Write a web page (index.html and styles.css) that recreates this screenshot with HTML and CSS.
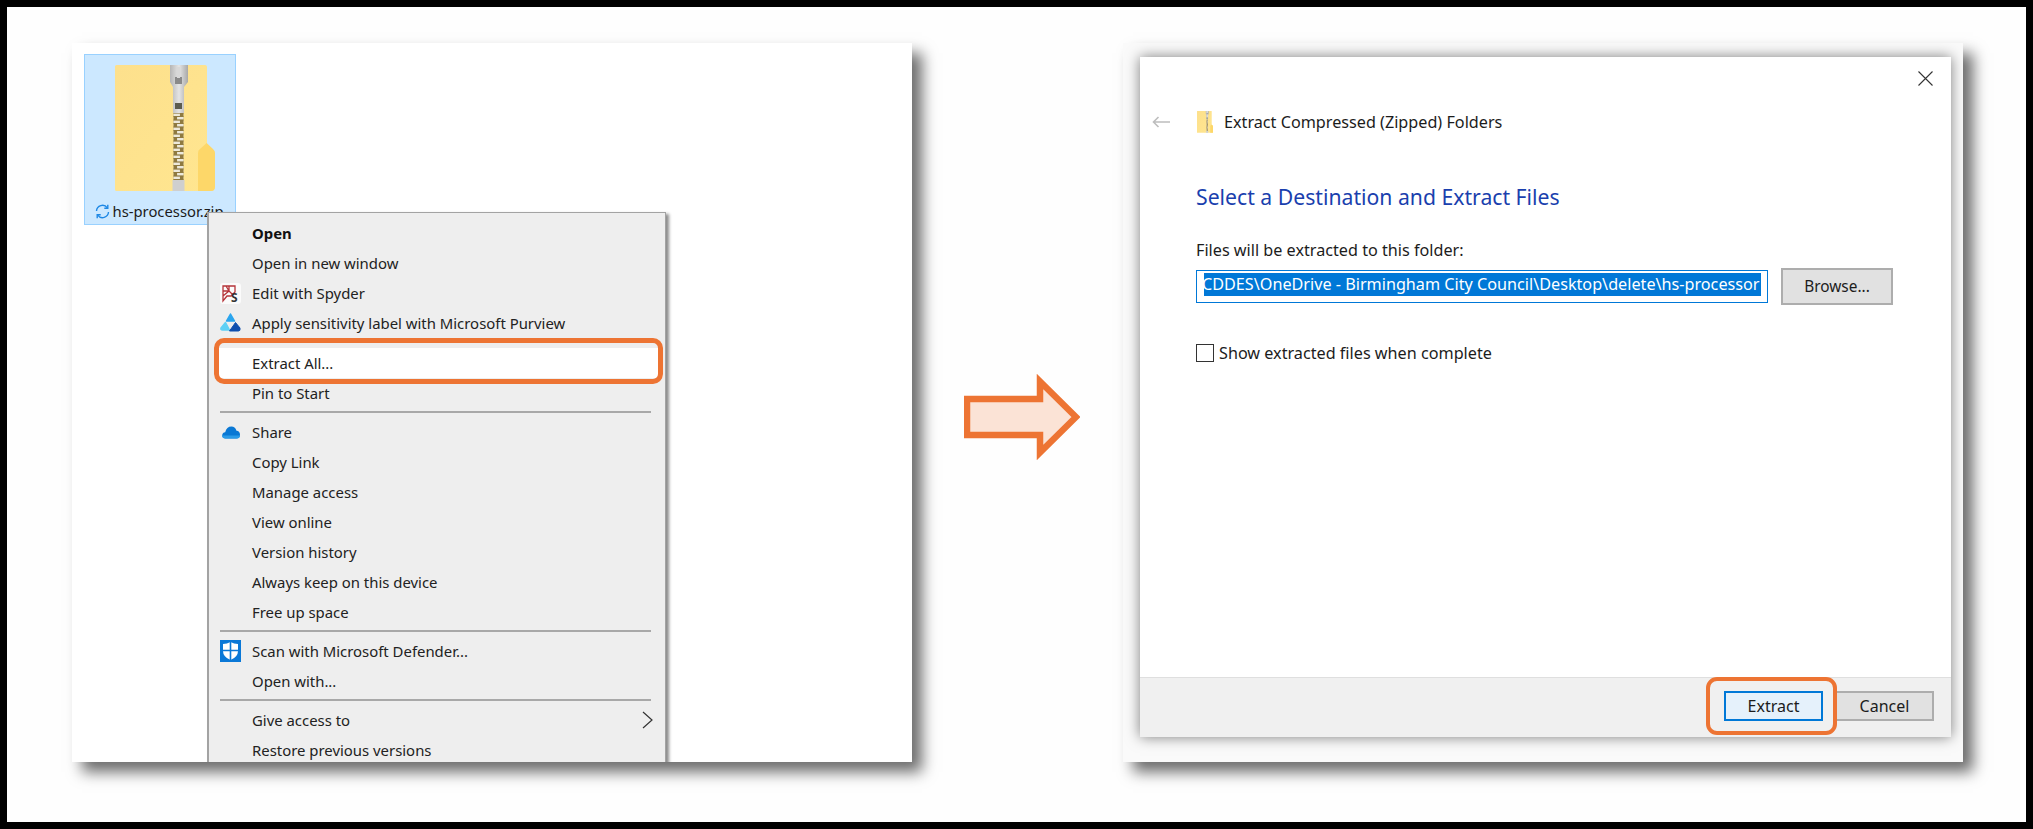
FILE: index.html
```html
<!DOCTYPE html>
<html lang="en">
<head>
<meta charset="utf-8">
<title>Extract zipped folder</title>
<link rel="stylesheet" href="styles.css">
</head>
<body>
<svg class="defs" width="0" height="0" aria-hidden="true">
  <defs>
    <linearGradient id="fg" x1="0" y1="0" x2="1" y2="1">
      <stop offset="0" stop-color="#fde08c"/><stop offset="1" stop-color="#ffe690"/>
    </linearGradient>
    <linearGradient id="mg" x1="0" y1="0" x2="1" y2="0">
      <stop offset="0" stop-color="#b5b5b5"/><stop offset=".5" stop-color="#e4e4e4"/><stop offset="1" stop-color="#a8a8a8"/>
    </linearGradient>
    <pattern id="teeth" width="10.4" height="7" patternUnits="userSpaceOnUse" x="58.3" y="48">
      <rect width="10.4" height="7" fill="#8f7a40"/>
      <rect x="0" y="0.6" width="6.6" height="2.4" fill="#ece9dc"/>
      <rect x="3.8" y="4" width="6.6" height="2.4" fill="#ece9dc"/>
    </pattern>
    <symbol id="zipfolder" viewBox="0 0 100 127" preserveAspectRatio="none">
      <path d="M0 1.500Q0 0 1.500 0H90Q92 0 92 2V80L99.500 86V123Q99.500 126 96 126H1.500Q0 126 0 124.500Z" fill="url(#fg)"/>
      <path d="M83 126V88Q83 85 85 84L91.700 78L98 84Q100 86 100 88V122Q100 126 96 126Z" fill="#fdd769"/>
      <rect x="58.300" y="48" width="10.400" height="67" fill="url(#teeth)"/>
      <rect x="57.500" y="115" width="12" height="11" fill="#cfcfcf"/>
      <path d="M55 0H73V17L69 22V48H58V22L55 17Z" fill="url(#mg)"/>
      <rect x="60" y="38" width="7" height="6" fill="#5c5c50"/>
      <rect x="60" y="12" width="7" height="7" fill="#8a8a8a"/>
      <rect x="62" y="2" width="3" height="11" fill="#d8d8d8"/>
    </symbol>
  </defs>
</svg>
<main class="frame">
  <section class="card card-left">
    <div class="tile">
      <svg class="tile-icon" width="100" height="127"><use href="#zipfolder"/></svg>
      <div class="tile-label">
        <svg class="sync" width="15" height="15" viewBox="0 0 15 15" fill="none" stroke="#1e88e5" stroke-width="1.400">
          <path d="M1.500 7A6 6 0 0 1 12.300 3.800"/>
          <path d="M13.500 8A6 6 0 0 1 2.700 11.200"/>
          <path d="M12.800 .8V4.300H9.300"/>
          <path d="M2.200 14.200V10.700H5.700"/>
        </svg>
        <span>hs-processor.zip</span>
      </div>
    </div>
    <div class="menu">
      <div class="row bold"><span class="ic"></span>Open</div>
      <div class="row"><span class="ic"></span>Open in new window</div>
      <div class="row"><span class="ic">
        <svg width="21" height="21" viewBox="0 0 21 21">
          <rect width="21" height="21" rx="3" fill="#fbfbfb"/>
          <path d="M3 3H15V9L11 13H7L3 18ZM3 8H9M9 3V8L13 12M3 13L9 8M6 3L9 8" fill="none" stroke="#b5353a" stroke-width="1.300"/>
          <text class="spy" x="11" y="19">S</text>
        </svg>
      </span>Edit with Spyder</div>
      <div class="row"><span class="ic">
        <svg width="21" height="20" viewBox="0 0 21 20">
          <path d="M10.500 1L14.500 8H6.500Z" fill="#2aa5ee" stroke="#2aa5ee" stroke-width="1.500" stroke-linejoin="round"/>
          <path d="M5.500 9.500L9.500 17H2.500Q.500 17 1 15Z" fill="#5fd0f5" stroke="#5fd0f5" stroke-width="1.500" stroke-linejoin="round"/>
          <path d="M15.500 9.500L20 15Q20.500 18 18.500 18H9.500Z" fill="#0f4fae" stroke="#0f4fae" stroke-width="1" stroke-linejoin="round"/>
          <path d="M6.500 9H14.500L10.500 15Z" fill="#eeeeee"/>
        </svg>
      </span>Apply sensitivity label with Microsoft Purview</div>
      <div class="row hl"><span class="ic"></span>Extract All...</div>
      <div class="row"><span class="ic"></span>Pin to Start</div>
      <div class="sep"></div>
      <div class="row"><span class="ic">
        <svg width="18" height="13" viewBox="0 0 18 13">
          <path d="M3.500 12.500Q.2 12.500 .2 9.500Q.2 6.500 3.200 6.300Q4.500 .5 9.500 .5Q13 .5 14.500 4.700Q18 5 18 8.800Q18 12.500 14.500 12.500Z" fill="#0a78d4"/>
          <path d="M3.500 12.500Q.2 12.500 .2 9.500H18Q18 12.500 14.500 12.500Z" fill="#2b9be8"/>
        </svg>
      </span>Share</div>
      <div class="row"><span class="ic"></span>Copy Link</div>
      <div class="row"><span class="ic"></span>Manage access</div>
      <div class="row"><span class="ic"></span>View online</div>
      <div class="row"><span class="ic"></span>Version history</div>
      <div class="row"><span class="ic"></span>Always keep on this device</div>
      <div class="row"><span class="ic"></span>Free up space</div>
      <div class="sep"></div>
      <div class="row"><span class="ic">
        <svg width="21" height="22" viewBox="0 0 21 22">
          <rect width="21" height="22" fill="#0a78d7"/>
          <path d="M10.500 2Q14 4 18 4V11Q18 17 10.500 20Q3 17 3 11V4Q7 4 10.500 2Z" fill="#fff"/>
          <path d="M10.500 2V20M3 10.500H18" stroke="#0a78d7" stroke-width="1.600"/>
        </svg>
      </span>Scan with Microsoft Defender...</div>
      <div class="row"><span class="ic"></span>Open with...</div>
      <div class="sep"></div>
      <div class="row row-sub"><span class="ic"></span>Give access to
        <svg class="chev" width="11" height="18" viewBox="0 0 11 18" fill="none" stroke="#333" stroke-width="1.200"><path d="M1 1L10 9L1 17"/></svg>
      </div>
      <div class="row"><span class="ic"></span>Restore previous versions</div>
    </div>
  </section>

  <svg class="arrow" width="116" height="86" viewBox="0 0 116 86">
    <path d="M3 25H76V7.500L112 43L76 78.500V61H3Z" fill="#fbe3d6" stroke="#ed7433" stroke-width="6.500"/>
  </svg>

  <section class="card card-right">
    <div class="dialog">
      <div class="dlg-body">
        <div class="dlg-close">
          <svg width="15" height="15" viewBox="0 0 15 15" stroke="#333" stroke-width="1.100"><path d="M.5 .5L14.500 14.500M14.500 .5L.5 14.500"/></svg>
        </div>
        <div class="dlg-head">
          <svg class="back" width="18" height="12" viewBox="0 0 18 12" fill="none" stroke="#bdbdbd" stroke-width="1.600"><path d="M18 6H1.500M6.500 1L1.500 6L6.500 11"/></svg>
          <svg class="mini" width="16" height="22"><use href="#zipfolder"/></svg>
          <span>Extract Compressed (Zipped) Folders</span>
        </div>
        <div class="dlg-content">
          <h1>Select a Destination and Extract Files</h1>
          <div class="lbl">Files will be extracted to this folder:</div>
          <div class="path-row">
            <div class="path"><span>CDDES\OneDrive - Birmingham City Council\Desktop\delete\hs-processor</span></div>
            <div class="btn btn-browse">Browse...</div>
          </div>
          <div class="check-row"><span class="check"></span><span>Show extracted files when complete</span></div>
        </div>
      </div>
      <div class="dlg-foot">
        <div class="btn btn-primary">Extract</div>
        <div class="btn btn-cancel">Cancel</div>
      </div>
    </div>
  </section>
</main>
</body>
</html>
```

FILE: styles.css
```css
html, body { margin: 0; padding: 0; background: #000; }
body { font-family: "Noto Sans", "Open Sans", sans-serif; color: #1c1c1c; }
.defs { position: absolute; }

.frame {
  box-sizing: border-box;
  width: 2033px;
  height: 829px;
  border: 7px solid #000;
  background: #fefefe;
  padding: 36px 63px 60px 65px;
  display: flex;
  align-items: flex-start;
}

.card {
  height: 719px;
  background: #fff;
  box-shadow: 10px 10px 14px rgba(0, 0, 0, .58);
  overflow: hidden;
  box-sizing: border-box;
  position: relative;
  flex: none;
}
.card-left { width: 840px; padding: 11px 0 0 12px; }
.card-right { width: 840px; padding: 14px 12px 25px 17px; background: #fafafa; }

/* file tile */
.tile {
  box-sizing: border-box;
  width: 152px;
  height: 171px;
  background: #cce8ff;
  border: 1px solid #99d1ff;
  padding: 10px 0 0 29.500px;
}
.tile-icon { display: block; }
.tile-label {
  display: flex;
  align-items: center;
  gap: 3px;
  margin: 9px 0 0 -20px;
  font-size: 14.800px;
  line-height: 20px;
  white-space: nowrap;
}

/* context menu */
.menu {
  position: absolute;
  left: 135px;
  top: 169px;
  width: 459px;
  box-sizing: border-box;
  height: 600px;
  background: #eee;
  border: 1px solid #a3a3a3;
  border-left-width: 2px;
  padding-top: 5px;
  box-shadow: 3px 2px 3px rgba(0, 0, 0, .45);
  font-size: 14.900px;
}
.row {
  height: 30px;
  display: flex;
  align-items: center;
  white-space: nowrap;
  padding-left: 11px;
  color: #222;
}
.bold { font-weight: 700; color: #111; }
.ic {
  width: 21px;
  margin-right: 11px;
  display: flex;
  justify-content: center;
  flex: none;
}
.hl {
  position: relative;
  margin: 10px 2px 0 5px;
  padding-left: 6px;
  background: #fff;
}
.hl::after {
  content: "";
  position: absolute;
  left: 0;
  right: 0;
  top: -10px;
  bottom: -6px;
  border: 5px solid #ed7433;
  border-radius: 10px;
}
.sep { height: 1.500px; background: #a8a8a8; margin: 3px 14px 4.500px 11px; }
.row-sub { position: relative; justify-content: flex-start; }
.chev { margin-left: auto; margin-right: 12px; }
.spy { font: 700 12px "Noto Sans", sans-serif; fill: #333; }

.arrow { flex: none; margin: 331px 43px 0 52px; }

/* dialog */
.dialog {
  height: 100%;
  background: #fff;
  display: flex;
  flex-direction: column;
  box-shadow: 0 0 13px rgba(0, 0, 0, .5);
}
.dlg-body { flex: 1; padding-top: 14px; font-size: 16px; }
.dlg-close { display: flex; justify-content: flex-end; padding-right: 18px; height: 15px; }
.dlg-head {
  display: flex;
  align-items: center;
  height: 24px;
  margin-top: 24px;
  padding-left: 12px;
  color: #1c1c1c;
  font-size: 16.200px;
}
.back { margin-right: 27px; }
.mini { margin-right: 11px; }
.dlg-content { padding-left: 56px; }
h1 {
  margin: 48px 0 0;
  font-size: 21.200px;
  line-height: 30px;
  font-weight: 400;
  color: #1a3fae;
}
.lbl { margin-top: 28px; line-height: 20px; font-size: 16.200px; }
.path-row { display: flex; align-items: center; margin-top: 8px; gap: 13px; }
.path {
  box-sizing: border-box;
  width: 572px;
  height: 33px;
  border: 1px solid #0078d7;
  padding: 2px 6px 2px 7px;
  overflow: hidden;
}
.path span {
  display: block;
  height: 23px;
  line-height: 23px;
  background: #0078d7;
  color: #fff;
  white-space: nowrap;
  overflow: hidden;
  font-size: 16.200px;
  text-indent: -2px;
}
.btn {
  box-sizing: border-box;
  width: 99px;
  height: 30px;
  display: flex;
  align-items: center;
  justify-content: center;
  font-size: 16px;
  flex: none;
}
.btn-browse { width: 112px; height: 37px; background: #e1e1e1; border: 2px solid #adadad; font-size: 15.400px; }
.check-row {
  display: flex;
  align-items: center;
  gap: 5px;
  margin-top: 38px;
  height: 20px;
  font-size: 16.200px;
}
.check { box-sizing: border-box; width: 18px; height: 18px; border: 1.500px solid #333; background: #fff; }
.dlg-foot {
  box-sizing: border-box;
  height: 60px;
  background: #f0f0f0;
  border-top: 1px solid #dfdfdf;
  padding: 13px 17px 0 0;
  display: flex;
  justify-content: flex-end;
  align-items: flex-start;
  gap: 12px;
}
.btn-primary { position: relative; background: #e5f1fb; border: 2px solid #0078d7; }
.btn-primary::after {
  content: "";
  position: absolute;
  left: -20px;
  right: -16px;
  top: -16px;
  bottom: -16px;
  border: 4.500px solid #ed7433;
  border-radius: 11px;
  z-index: 1;
}
.btn-cancel { background: #e1e1e1; border: 2px solid #adadad; }
```
